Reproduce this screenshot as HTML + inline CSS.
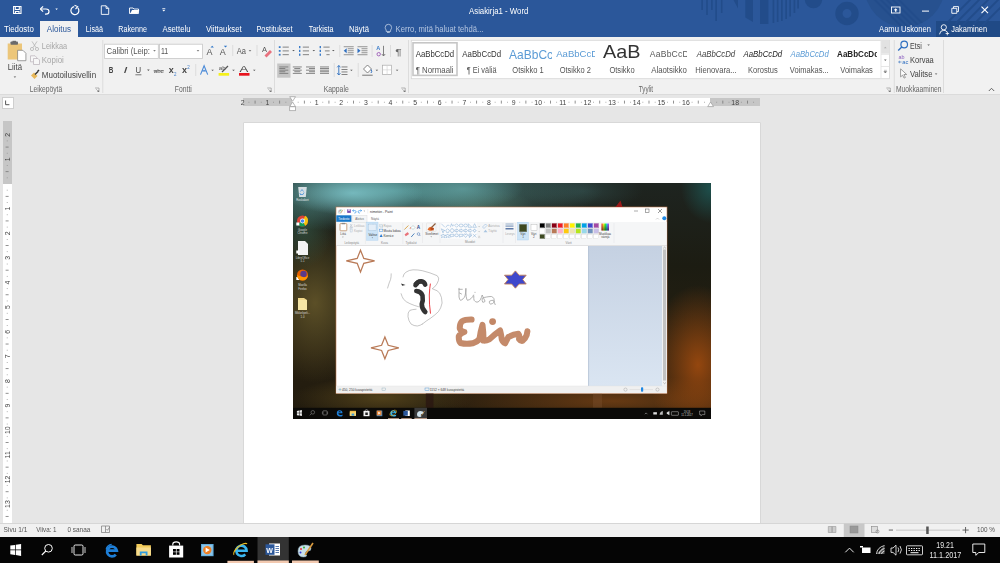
<!DOCTYPE html>
<html><head><meta charset="utf-8">
<style>
*{margin:0;padding:0;box-sizing:border-box}
html,body{width:1000px;height:563px;overflow:hidden}
body{position:relative;font-family:"Liberation Sans", sans-serif;background:#e6e6e6;color:#444}
.a{position:absolute;white-space:nowrap}
</style></head><body>
<div class="a" style="left:0;top:0;width:1000px;height:37px;background:#2b579a"></div>
<div class="a" style="left:40px;top:21.3px;width:38px;height:15.7px;background:#f1f1f1"></div>
<div class="a" style="left:936.3px;top:21.3px;width:63.7px;height:15.7px;background:#204a86"></div>
<div class="a" style="left:0;top:37px;width:1000px;height:58px;background:#f1f1f1"></div>
<div class="a" style="left:0;top:94.4px;width:1000px;height:1px;background:#dbdbdb"></div>
<div class="a" style="left:1.5px;top:97px;width:12px;height:11.5px;background:#fff;border:1px solid #cfcfcf"></div>
<div class="a" style="left:243px;top:98px;width:49px;height:8.3px;background:#c6c6c6"></div>
<div class="a" style="left:292px;top:98px;width:418px;height:8.3px;background:#fff"></div>
<div class="a" style="left:710px;top:98px;width:49.5px;height:8.3px;background:#c6c6c6"></div>
<div class="a" style="left:3px;top:121.3px;width:8.5px;height:62.7px;background:#c6c6c6"></div>
<div class="a" style="left:3px;top:184px;width:8.5px;height:339px;background:#fff"></div>
<div class="a" style="left:244px;top:122.8px;width:516px;height:400.2px;background:#fff;box-shadow:0 0 0 0.6px #d0d0d0"></div>
<div id="img" class="a" style="left:293px;top:183px;width:418px;height:236px;overflow:hidden;background:
radial-gradient(ellipse 70px 22px at 60px 10px, rgba(125,195,200,0.85), rgba(125,195,200,0) 100%),
radial-gradient(ellipse 60px 20px at 170px 6px, rgba(100,165,165,0.7), rgba(100,165,165,0) 100%),
radial-gradient(ellipse 210px 42px at 100px 8px, rgba(85,150,150,0.95), rgba(85,150,150,0) 100%),
radial-gradient(ellipse 60px 20px at 180px 24px, rgba(80,100,70,0.6), rgba(80,100,70,0) 100%),
radial-gradient(ellipse 60px 20px at 290px 8px, rgba(45,68,66,0.8), rgba(45,68,66,0) 100%),
radial-gradient(ellipse 30px 35px at 418px 5px, rgba(30,85,82,0.9), rgba(30,85,82,0) 100%),
radial-gradient(ellipse 30px 40px at 10px 45px, rgba(50,85,70,0.7), rgba(50,85,70,0) 100%),
radial-gradient(ellipse 55px 80px at 22px 120px, rgba(95,82,40,0.95), rgba(95,82,40,0) 100%),
radial-gradient(ellipse 50px 80px at 405px 182px, rgba(160,75,15,0.9), rgba(160,75,15,0) 100%),
radial-gradient(ellipse 180px 25px at 320px 218px, rgba(120,65,20,0.8), rgba(120,65,20,0) 100%),
radial-gradient(ellipse 90px 22px at 90px 215px, rgba(90,72,28,0.8), rgba(90,72,28,0) 100%),
linear-gradient(180deg,#1e2420 0%,#1c1c12 35%,#261f10 70%,#221b0e 100%)">
<svg width="418" height="236" style="position:absolute;left:0;top:0">
<g transform="translate(-293,-183)">
<!-- desktop icons -->
<g>
<path d="M298.2 187 h8.6 l-1 10 h-6.6z" fill="#e4eaee" opacity="0.9"/><path d="M300.5 191.5 l1.5 -2 l1.5 2 M304 192.5 l-1 2 h-3 M299.8 193 l0.8 1.5" fill="none" stroke="#3a8ad8" stroke-width="0.7"/>
<text x="302.5" y="201" font-size="2.8" fill="#e8e8e8" text-anchor="middle">Roskakori</text>
<circle cx="302.5" cy="221" r="5.5" fill="#db4437"/><path d="M302.5 221 L297.7 223.8 A5.5 5.5 0 0 0 305.3 225.8Z" fill="#0f9d58"/><path d="M302.5 221 L308 221 A5.5 5.5 0 0 0 305.3 215.8 L302.5 221Z" fill="#f4c20d"/><path d="M302.5 221 L305.3 225.8 A5.5 5.5 0 0 0 308 221Z" fill="#f4c20d"/><circle cx="302.5" cy="221" r="2.4" fill="#fff"/><circle cx="302.5" cy="221" r="1.8" fill="#4285f4"/>
<text x="302.5" y="230.5" font-size="2.8" fill="#d8d8d8" text-anchor="middle">Google</text><text x="302.5" y="234" font-size="2.8" fill="#d8d8d8" text-anchor="middle">Chrome</text>
<path d="M298 241 h7 l3 3 v11 h-10z" fill="#f4f4f4"/><rect x="296.3" y="222.5" width="3" height="3" fill="#fff"/><rect x="296.3" y="250.5" width="3" height="3" fill="#fff"/><rect x="296.3" y="277" width="3" height="3" fill="#fff"/>
<text x="302.5" y="258.5" font-size="2.8" fill="#d8d8d8" text-anchor="middle">LibreOffice</text><text x="302.5" y="262" font-size="2.8" fill="#d8d8d8" text-anchor="middle">5.1</text>
<circle cx="302.5" cy="275" r="5.5" fill="#e66000"/><circle cx="303.5" cy="274" r="3.2" fill="#5a3a8a"/><path d="M297 275 a5.5 5.5 0 0 0 11 0 q-2 3 -5 2 q-4 -1 -6 -2z" fill="#ff9500"/>
<text x="302.5" y="286" font-size="2.8" fill="#d8d8d8" text-anchor="middle">Mozilla</text><text x="302.5" y="289.5" font-size="2.8" fill="#d8d8d8" text-anchor="middle">Firefox</text>
<path d="M298 298 h6 l3 2 v10 h-9z" fill="#f0d88a"/><rect x="298" y="300" width="9" height="10" fill="#f6e6a6"/>
<text x="302.5" y="314" font-size="2.8" fill="#d8d8d8" text-anchor="middle">Mikkelipeli...</text><text x="302.5" y="317.5" font-size="2.8" fill="#d8d8d8" text-anchor="middle">1.0</text>
</g>
<!-- paint window -->
<rect x="336" y="207" width="331" height="186.5" fill="#fff" stroke="#c07a50" stroke-width="0.6"/>
<rect x="336.3" y="222" width="330.4" height="23.5" fill="#f5f6f7"/>
<line x1="336" y1="245.5" x2="667" y2="245.5" stroke="#dadbdc" stroke-width="0.8"/>
<rect x="336.3" y="215.3" width="15.2" height="6.5" fill="#1979ca"/>
<rect x="352" y="215.3" width="15" height="7" fill="#f5f6f7" stroke="#dadbdc" stroke-width="0.5"/>
<text x="338.2" y="220.2" font-size="3.4" fill="#fff" font-family="Liberation Sans" textLength="11.2" lengthAdjust="spacingAndGlyphs">Tiedosto</text>
<text x="355.3" y="220.2" font-size="3.4" fill="#666" font-family="Liberation Sans" textLength="8.6" lengthAdjust="spacingAndGlyphs">Aloitus</text>
<text x="371" y="220.2" font-size="3.4" fill="#666" font-family="Liberation Sans" textLength="7.8" lengthAdjust="spacingAndGlyphs">Näytä</text>
<!-- title icons -->
<path d="M338.2 212.8 q0 -3.3 2.4 -3.3 q1.8 0 1.8 1.3 q0 0.8 -0.8 0.8 q-0.6 0 -0.6 0.6 q0 0.6 0.4 0.7 q-0.3 0.5 -1 0.5 q-2.2 0 -2.2 -0.6z" fill="#d8e8f0" stroke="#8aa" stroke-width="0.25"/><circle cx="339.3" cy="211" r="0.45" fill="#e33"/><circle cx="340.6" cy="210.3" r="0.45" fill="#3a3"/><path d="M340.8 213 l2 -3.2" stroke="#d89a40" stroke-width="0.6"/>
<line x1="344.5" y1="209" x2="344.5" y2="213.5" stroke="#ccc" stroke-width="0.3"/>
<rect x="347.2" y="209.3" width="3.6" height="3.6" fill="#7a4fb0"/><rect x="348" y="209.3" width="2" height="1.4" fill="#e8e0f0"/>
<path d="M352.6 210.6 h2.2 q1.3 0 1.3 1.2 q0 1.2 -1.3 1.2 h-0.6 M352.6 210.6 l1.1 -1 M352.6 210.6 l1.1 1" fill="none" stroke="#1e88e5" stroke-width="0.6"/>
<path d="M361.6 210.6 h-2.2 q-1.3 0 -1.3 1.2 q0 1.2 1.3 1.2 h0.6 M361.6 210.6 l-1.1 -1 M361.6 210.6 l-1.1 1" fill="none" stroke="#1e88e5" stroke-width="0.6"/>
<path d="M363.6 210.8 h1.4 l-0.7 0.8z" fill="#555"/>
<line x1="367.8" y1="209" x2="367.8" y2="213.5" stroke="#ccc" stroke-width="0.3"/>
<text x="370" y="212.7" font-size="3.4" fill="#333" font-family="Liberation Sans">nimetön - Paint</text>
<line x1="634" y1="211" x2="638" y2="211" stroke="#555" stroke-width="0.5"/>
<rect x="645.5" y="209" width="3.5" height="3.5" fill="none" stroke="#555" stroke-width="0.5"/>
<path d="M658 209 l4 4 M662 209 l-4 4" stroke="#555" stroke-width="0.6"/>
<circle cx="664.3" cy="218.3" r="2" fill="#1e88e5"/>
<path d="M656 219.5 l1.5 -1.5 l1.5 1.5" stroke="#999" stroke-width="0.4" fill="none"/>
<!-- ribbon tools -->
<rect x="340" y="223.6" width="6.8" height="7.2" rx="0.6" fill="#fff" stroke="#b98a62" stroke-width="0.8"/><rect x="341.8" y="222.9" width="3.2" height="1.3" fill="#8a8a8a"/>
<text x="340.3" y="235" font-size="3" fill="#444" font-family="Liberation Sans">Liitä</text><path d="M342.2 236.8 h1.4 l-0.7 0.7z" fill="#555"/>
<path d="M350.2 224 l2 3 M352.2 224 l-2 3" stroke="#9ab" stroke-width="0.4"/><circle cx="350.5" cy="227.5" r="0.6" fill="none" stroke="#9ab" stroke-width="0.35"/><circle cx="352" cy="227.5" r="0.6" fill="none" stroke="#9ab" stroke-width="0.35"/>
<text x="354" y="227.1" font-size="3" fill="#b0b0b0" font-family="Liberation Sans">Leikkaa</text>
<rect x="350" y="228.7" width="2" height="2.6" fill="none" stroke="#bcd" stroke-width="0.35"/><rect x="350.8" y="229.5" width="2" height="2.6" fill="none" stroke="#bcd" stroke-width="0.35"/>
<text x="354" y="232.1" font-size="3" fill="#b0b0b0" font-family="Liberation Sans">Kopioi</text>
<text x="344.4" y="243.8" font-size="3" fill="#888" font-family="Liberation Sans">Leikepöytä</text>
<line x1="365.4" y1="223" x2="365.4" y2="244" stroke="#e2e3e4" stroke-width="0.5"/>
<rect x="366.7" y="222.1" width="11.3" height="18.1" fill="#cce4f7" stroke="#a6cdef" stroke-width="0.4"/>
<rect x="368.4" y="224.2" width="7.9" height="6.3" fill="#e4eef8" stroke="#8aaccc" stroke-width="0.45" stroke-dasharray="0.8 0.4"/>
<text x="368.4" y="235.6" font-size="3" fill="#333" font-family="Liberation Sans">Valitse</text><path d="M371.6 237.6 h1.4 l-0.7 0.7z" fill="#555"/>
<path d="M379.8 224 v3 h2.5 M380.5 224.8 h2 v2.8" stroke="#8ab" stroke-width="0.4" fill="none"/>
<text x="383.5" y="227.1" font-size="3" fill="#aaa" font-family="Liberation Sans">Rajaa</text>
<rect x="379.4" y="229.1" width="3.4" height="2.6" fill="none" stroke="#3a8ad8" stroke-width="0.45"/>
<text x="383.5" y="232" font-size="3" fill="#333" font-family="Liberation Sans">Muuta kokoa</text>
<path d="M379.6 237 l1.5 -3 l1.5 3z" fill="#2a7ad0"/>
<text x="383.5" y="236.8" font-size="3" fill="#333" font-family="Liberation Sans">Kierrä ▾</text>
<text x="381" y="243.8" font-size="3" fill="#888" font-family="Liberation Sans">Kuva</text>
<line x1="402.8" y1="223" x2="402.8" y2="244" stroke="#e2e3e4" stroke-width="0.5"/>
<path d="M404.6 229.3 l3.8 -3.8" stroke="#d8a040" stroke-width="0.9"/><path d="M404.4 229.6 l0.6 -0.2 l-0.4 -0.4z" fill="#555"/>
<path d="M411 227.5 l2 -2 l2 2 l-2 2z" fill="#fff" stroke="#7aa" stroke-width="0.4"/><path d="M410.6 227.3 q-0.8 1.2 0 1.8" stroke="#e06040" stroke-width="0.7" fill="none"/>
<text x="416.8" y="229" font-size="4.6" fill="#2a4a8a" font-family="Liberation Sans" font-weight="bold">A</text>
<rect x="404.8" y="233" width="4" height="2.4" rx="0.4" fill="#e8727a" transform="rotate(-35 406.8 234.2)"/>
<path d="M411.2 237 l3.2 -3.6" stroke="#2a6ab0" stroke-width="0.8"/>
<circle cx="418.5" cy="234" r="1.3" fill="none" stroke="#3a6ab0" stroke-width="0.5"/><path d="M419.4 235 l1 1" stroke="#3a6ab0" stroke-width="0.5"/>
<text x="405.5" y="243.8" font-size="3" fill="#888" font-family="Liberation Sans">Työkalut</text>
<line x1="422.5" y1="223" x2="422.5" y2="243" stroke="#e2e3e4" stroke-width="0.5"/>
<rect x="426.5" y="223" width="9.5" height="8.5" rx="0.8" fill="#f6f6f6" stroke="#d8d8d8" stroke-width="0.4"/><path d="M427.5 229.5 q1.5 -3.5 5 -2.5 l-0.5 3.5 q-2.5 0.8 -4.5 -1z" fill="#e06a2a"/><path d="M430 228.5 q2 -1 4 -0.5 l-0.5 2.5 q-2 0.5 -3.5 -2z" fill="#b84a1a"/><path d="M431.5 227.5 l4 -4" stroke="#8a5a3a" stroke-width="1.1"/><text x="425.3" y="234.6" font-size="3" fill="#444" font-family="Liberation Sans">Siveltimet</text><path d="M430.5 236.6 h1.4 l-0.7 0.7z" fill="#555"/>
<line x1="440" y1="223" x2="440" y2="243" stroke="#e2e3e4" stroke-width="0.5"/>
<rect x="440.5" y="222.6" width="36.5" height="16.2" fill="#fbfbfc"/><g stroke="#6a9ccc" stroke-width="0.42" fill="none"><path d="M441.29999999999995 223.7 L444.9 227.29999999999998"/><path d="M445.79999999999995 227.29999999999998 q1.8 -3.6 3.6 -1.8"/><path d="M450.29999999999995 227.29999999999998 l1.2 -3.6 l1.2 2.52 l1.2 -1.8"/><path d="M454.79999999999995 225.5 l1.8 -1.8 l1.8 1.8 l-1.8 1.8z"/><rect x="459.29999999999995" y="224.2" width="3.6" height="2.6" rx="1"/><ellipse cx="465.59999999999997" cy="225.5" rx="1.8" ry="1.5"/><path d="M468.29999999999995 227.29999999999998 v-3.6 l3.6 3.6z"/><path d="M472.79999999999995 227.29999999999998 l1.8 -3.6 l1.8 3.6z"/><path d="M441.29999999999995 228.79999999999998 l3.6 1.8 l-1.8 0.5 v1.8z"/><path d="M447.59999999999997 228.79999999999998 l1.8 1.4 l-0.7 2.2 h-2.2 l-0.7 -2.2z"/><path d="M451.19999999999993 228.79999999999998 h1.8 l0.9 1.8 l-0.9 1.8 h-1.8 l-0.9 -1.8z"/><path d="M454.79999999999995 229.79999999999998 h2 v-1 l1.6 1.8 l-1.6 1.8 v-1 h-2z"/><path d="M459.29999999999995 229.79999999999998 h2 v-1 l1.6 1.8 l-1.6 1.8 v-1 h-2z"/><path d="M463.79999999999995 229.79999999999998 h2 v-1 l1.6 1.8 l-1.6 1.8 v-1 h-2z"/><path d="M468.29999999999995 229.79999999999998 h2 v-1 l1.6 1.8 l-1.6 1.8 v-1 h-2z"/><path d="M474.59999999999997 228.79999999999998 l0.6 1.2 l1.2 0.6 l-1.2 0.6 l-0.6 1.2 l-0.6 -1.2 l-1.2 -0.6 l1.2 -0.6z"/><path d="M443.09999999999997 233.89999999999998 l0.8 1.3 h1.4 l-1 1.1 l0.5 1.4 l-1.7 -0.8 l-1.7 0.8 l0.5 -1.4 l-1 -1.1 h1.4z"/><path d="M447.59999999999997 233.89999999999998 l0.8 1.3 h1.4 l-1 1.1 l0.5 1.4 l-1.7 -0.8 l-1.7 0.8 l0.5 -1.4 l-1 -1.1 h1.4z"/><path d="M450.29999999999995 234.29999999999998 h3.6 v2.0 h-2 l-1 1 v-1 h-0.6000000000000001 z"/><ellipse cx="456.59999999999997" cy="235.29999999999998" rx="1.8" ry="1.4"/><path d="M459.29999999999995 234.29999999999998 h3.6 v2.0 h-2 l-1 1 v-1 h-0.6000000000000001 z"/><path d="M465.59999999999997 237.49999999999997 l-1.7 -2 q-0.5 -1.5 0.8 -1.6 q0.9 0 0.9 0.8 q0 -0.8 0.9 -0.8 q1.3 0.1 0.8 1.6z"/><path d="M469.29999999999995 233.89999999999998 h2 l-1 1.5 h1.5 l-2.5 2.2 l0.6 -1.6 h-1.3z"/><path d="M472.79999999999995 233.89999999999998 l3.6 3.6 M476.4 233.89999999999998 l-3.6 3.6"/></g><path d="M478.3 226 l0.9 0.9 l0.9 -0.9" stroke="#888" stroke-width="0.35" fill="none"/><path d="M478.3 231 l0.9 0.9 l0.9 -0.9" stroke="#888" stroke-width="0.35" fill="none"/><path d="M478.3 236.3 h1.8 M478.3 237.2 l0.9 0.9 l0.9 -0.9" stroke="#888" stroke-width="0.35" fill="none"/><path d="M482.5 227 l3 -3 l1.5 1.5 l-3 3z" fill="none" stroke="#7aa8d8" stroke-width="0.45"/><path d="M483.5 232.3 l2 -2.5 l2 2.5z" fill="#a8c4e0"/><text x="488.3" y="226.6" font-size="3" fill="#aaa" font-family="Liberation Sans">Ääriviiva</text><text x="488.3" y="232" font-size="3" fill="#aaa" font-family="Liberation Sans">Täyttö</text><text x="465" y="243.3" font-size="3" fill="#888" font-family="Liberation Sans">Muodot</text>
<line x1="503" y1="223" x2="503" y2="243" stroke="#e2e3e4" stroke-width="0.5"/>
<rect x="505.5" y="223.5" width="8" height="1" fill="#9ab0cc"/><rect x="505.5" y="225.5" width="8" height="1.2" fill="#7f98bc"/><rect x="505.5" y="228" width="8" height="1.5" fill="#5f7aa8"/>
<text x="505.2" y="235" font-size="3" fill="#aaa" font-family="Liberation Sans">Leveys</text>
<line x1="515.5" y1="223" x2="515.5" y2="243" stroke="#e2e3e4" stroke-width="0.5"/>
<rect x="517.6" y="222.2" width="10.8" height="17.8" fill="#cce4f7" stroke="#a6cdef" stroke-width="0.4"/>
<rect x="519.3" y="224.3" width="7.5" height="7.5" fill="#3e4a22" stroke="#888" stroke-width="0.3"/>
<text x="520.2" y="235" font-size="3" fill="#444" font-family="Liberation Sans">Väri</text><text x="522.3" y="238.3" font-size="3" fill="#444" font-family="Liberation Sans">1</text>
<rect x="531" y="224.5" width="6" height="6" fill="#fff" stroke="#999" stroke-width="0.3"/>
<text x="531" y="235" font-size="3" fill="#444" font-family="Liberation Sans">Väri</text><text x="533" y="238.3" font-size="3" fill="#444" font-family="Liberation Sans">2</text>
<rect x="539.8" y="223.2" width="5" height="4.6" fill="#000000" stroke="#ddd" stroke-width="0.25"/><rect x="545.8" y="223.2" width="5" height="4.6" fill="#7f7f7f" stroke="#ddd" stroke-width="0.25"/><rect x="551.8" y="223.2" width="5" height="4.6" fill="#880015" stroke="#ddd" stroke-width="0.25"/><rect x="557.8" y="223.2" width="5" height="4.6" fill="#ed1c24" stroke="#ddd" stroke-width="0.25"/><rect x="563.8" y="223.2" width="5" height="4.6" fill="#ff7f27" stroke="#ddd" stroke-width="0.25"/><rect x="569.8" y="223.2" width="5" height="4.6" fill="#fff200" stroke="#ddd" stroke-width="0.25"/><rect x="575.8" y="223.2" width="5" height="4.6" fill="#22b14c" stroke="#ddd" stroke-width="0.25"/><rect x="581.8" y="223.2" width="5" height="4.6" fill="#00a2e8" stroke="#ddd" stroke-width="0.25"/><rect x="587.8" y="223.2" width="5" height="4.6" fill="#3f48cc" stroke="#ddd" stroke-width="0.25"/><rect x="593.8" y="223.2" width="5" height="4.6" fill="#a349a4" stroke="#ddd" stroke-width="0.25"/><rect x="539.8" y="228.7" width="5" height="4.6" fill="#ffffff" stroke="#ccc" stroke-width="0.25"/><rect x="545.8" y="228.7" width="5" height="4.6" fill="#c3c3c3" stroke="#ccc" stroke-width="0.25"/><rect x="551.8" y="228.7" width="5" height="4.6" fill="#b97a57" stroke="#ccc" stroke-width="0.25"/><rect x="557.8" y="228.7" width="5" height="4.6" fill="#ffaec9" stroke="#ccc" stroke-width="0.25"/><rect x="563.8" y="228.7" width="5" height="4.6" fill="#ffc90e" stroke="#ccc" stroke-width="0.25"/><rect x="569.8" y="228.7" width="5" height="4.6" fill="#efe4b0" stroke="#ccc" stroke-width="0.25"/><rect x="575.8" y="228.7" width="5" height="4.6" fill="#b5e61d" stroke="#ccc" stroke-width="0.25"/><rect x="581.8" y="228.7" width="5" height="4.6" fill="#99d9ea" stroke="#ccc" stroke-width="0.25"/><rect x="587.8" y="228.7" width="5" height="4.6" fill="#7092be" stroke="#ccc" stroke-width="0.25"/><rect x="593.8" y="228.7" width="5" height="4.6" fill="#c8bfe7" stroke="#ccc" stroke-width="0.25"/><rect x="539.8" y="234.2" width="5" height="4.6" fill="#3e4a22" stroke="#cfcfcf" stroke-width="0.35"/><rect x="545.8" y="234.2" width="5" height="4.6" fill="#fff" stroke="#cfcfcf" stroke-width="0.35"/><rect x="551.8" y="234.2" width="5" height="4.6" fill="#fff" stroke="#cfcfcf" stroke-width="0.35"/><rect x="557.8" y="234.2" width="5" height="4.6" fill="#fff" stroke="#cfcfcf" stroke-width="0.35"/><rect x="563.8" y="234.2" width="5" height="4.6" fill="#fff" stroke="#cfcfcf" stroke-width="0.35"/><rect x="569.8" y="234.2" width="5" height="4.6" fill="#fff" stroke="#cfcfcf" stroke-width="0.35"/><rect x="575.8" y="234.2" width="5" height="4.6" fill="#fff" stroke="#cfcfcf" stroke-width="0.35"/><rect x="581.8" y="234.2" width="5" height="4.6" fill="#fff" stroke="#cfcfcf" stroke-width="0.35"/><rect x="587.8" y="234.2" width="5" height="4.6" fill="#fff" stroke="#cfcfcf" stroke-width="0.35"/><rect x="593.8" y="234.2" width="5" height="4.6" fill="#fff" stroke="#cfcfcf" stroke-width="0.35"/>
<text x="565.5" y="243.5" font-size="3" fill="#888" font-family="Liberation Sans">Värit</text>
<defs><linearGradient id="rb" x1="0" x2="1"><stop offset="0" stop-color="#f33"/><stop offset="0.3" stop-color="#ff3"/><stop offset="0.5" stop-color="#3f3"/><stop offset="0.7" stop-color="#3cf"/><stop offset="1" stop-color="#c3f"/></linearGradient>
<linearGradient id="dk" x1="0" y1="0" x2="0" y2="1"><stop offset="0" stop-color="#000" stop-opacity="0"/><stop offset="1" stop-color="#000" stop-opacity="0.55"/></linearGradient><linearGradient id="bluearea" x1="0" y1="0" x2="0" y2="1"><stop offset="0" stop-color="#c5d1e2"/><stop offset="1" stop-color="#dae5f2"/></linearGradient></defs>
<rect x="601.5" y="223.5" width="7.5" height="7" fill="url(#rb)"/><rect x="601.5" y="223.5" width="7.5" height="7" fill="url(#dk)"/>
<text x="599" y="235" font-size="3" fill="#444" font-family="Liberation Sans" textLength="12" lengthAdjust="spacingAndGlyphs">Muokkaa</text>
<text x="601.3" y="238.3" font-size="3" fill="#444" font-family="Liberation Sans">värejä</text>
<line x1="614" y1="223" x2="614" y2="243" stroke="#e2e3e4" stroke-width="0.5"/>
<!-- canvas area -->
<rect x="588.3" y="246" width="74" height="140" fill="url(#bluearea)"/>
<line x1="588.6" y1="246" x2="588.6" y2="386" stroke="#9fb0c8" stroke-width="0.6"/>
<rect x="662.3" y="246" width="4.5" height="140" fill="#f0f0f0"/>
<rect x="663" y="249.5" width="3" height="131" fill="#c2c2c2"/>
<path d="M663.3 248.3 l1.3 -1.2 l1.3 1.2" stroke="#666" stroke-width="0.4" fill="none"/>
<path d="M663.3 382.5 l1.3 1.2 l1.3 -1.2" stroke="#666" stroke-width="0.4" fill="none"/>
<!-- status bar -->
<rect x="336.3" y="386" width="330.4" height="7.2" fill="#f0f0f0"/>
<line x1="336" y1="386" x2="667" y2="386" stroke="#e0e0e0" stroke-width="0.4"/>
<path d="M338.5 389.5 h3 M340 388 v3" stroke="#7ab" stroke-width="0.5"/>
<text x="342" y="391.3" font-size="3.2" fill="#444" font-family="Liberation Sans" textLength="30.4" lengthAdjust="spacingAndGlyphs">450, 250 kuvapistettä</text>
<rect x="382" y="388" width="3.5" height="2.5" fill="none" stroke="#8ab" stroke-width="0.4"/>
<rect x="425" y="388" width="4" height="2.8" fill="none" stroke="#3a8ad0" stroke-width="0.4"/>
<text x="429.8" y="391.3" font-size="3.2" fill="#444" font-family="Liberation Sans" textLength="34.3" lengthAdjust="spacingAndGlyphs">1152 × 648 kuvapistettä</text>
<circle cx="625.5" cy="389.6" r="1.6" fill="none" stroke="#888" stroke-width="0.35"/>
<line x1="629.5" y1="389.6" x2="653" y2="389.6" stroke="#ccc" stroke-width="0.4"/>
<rect x="641" y="387.3" width="2.2" height="4.5" rx="0.8" fill="#1e88e5"/>
<circle cx="657.5" cy="389.6" r="1.6" fill="none" stroke="#888" stroke-width="0.35"/>
<!-- drawings -->
<g fill="none" stroke="#b97a57" stroke-width="1.25" stroke-linejoin="miter">
<path d="M360.5 250.2 L363.8 258.4 L374.6 260.9 L363.8 263.4 L360.5 272 L357.2 263.4 L346.3 260.9 L357.2 258.4 Z"/>
<path d="M384.9 337 L388.2 345.3 L398.8 347.9 L388.2 350.5 L384.9 358.8 L381.6 350.5 L371 347.9 L381.6 345.3 Z"/>
</g>
<path d="M515.4 270.9 L519.1 275.2 L526.2 275.2 L522.7 279.5 L526.2 284 L519.1 284 L515.4 288.2 L511.7 284 L504.5 284 L508.1 279.5 L504.5 275.2 L511.7 275.2Z" fill="#3f48cc" stroke="#c07d58" stroke-width="0.9" stroke-linejoin="round"/>
<g fill="none" stroke="#a0a0a0" stroke-width="0.6" stroke-linecap="round" stroke-linejoin="round">
<path d="M391.2 273.8 Q391.2 277 390.6 279.4 Q389.3 282 387.6 288"/>
<path d="M403 276.9 Q403.5 273.5 406 272.2 Q409 270 413 269.8 Q418 269.7 422.3 270.7 Q430 272.5 437.2 275.7 Q439.5 278 438.4 280.6 Q437 284.5 434.7 286.8 L432.2 288.7 Q438 290.5 439.7 293.1 Q442 297 442.1 303 Q441 308.5 438.4 311.7 Q435 315 431 317.9 Q426 321 422.3 324.1"/>
<path d="M401.1 293.7 Q402 297 403.6 299.3 Q406 302 409.8 303.6 Q414 305.5 418.5 306.7"/>
<path d="M416.1 309.2 Q412 309.5 409.8 310.4 Q407.5 312.5 408 316.7 Q408.5 321 411.1 324.1 Q414 326 417.3 326 Q420.5 325.5 422.3 324.1"/>
</g>
<path d="M401.1 283.6 L405.5 285 L402.2 285.8Z" fill="#2e2e2e"/>
<g fill="none" stroke="#333" stroke-width="4.6" stroke-linecap="round" stroke-linejoin="round">
<path d="M415.5 285.2 Q417.5 281.3 421 281.3 Q424.3 281.8 425.2 284.6"/>
<path d="M416.3 291 Q421 291.5 422.5 295.5 Q423.3 300.5 421.8 304 Q421.6 308.5 425.3 312"/>
</g>
<path d="M413.2 284 q3 -5 8 -4.5 q5 0.5 5.8 5.5 l-3 0.8 q-1 -2.5 -3 -2.5 q-2 0 -3 2.5z" fill="#333"/>
<path d="M430.4 283.6 Q429.6 288 429.3 295 Q429.1 304 430.5 313.6" fill="none" stroke="#e8242a" stroke-width="0.9"/>
<g fill="none" stroke="#9a9a9a" stroke-width="0.75" stroke-linecap="round" stroke-linejoin="round">
<path d="M459 288.3 L459 297 Q459.5 299.5 460.4 300.3 Q462 300 463 298.9 Q464.5 297.5 465 296 Q466 292 465.9 288.3 Q465.7 292 466.2 296.5 Q466.6 299.5 467.4 300.3 Q469.5 300 471.2 298.4 Q472.8 296.8 473.6 295"/>
<path d="M459 289.3 L462.3 289.3 M459.5 293 L461.5 294"/>
<path d="M473.8 296 Q473.6 299 474.1 300.3 Q475.3 302 477 302.2 Q479 302 480.3 299.8 Q481.5 297.5 482.2 295 Q483 297 483.7 298.4 Q484.5 300 485.1 301.3 Q484 302.5 482.7 302.2 Q481.8 300.5 482.2 298.4 Q484 297.3 486.6 297 Q489 296.5 491.4 296.5 Q493 297 493.8 298.4 Q494.5 300.5 494.2 302.2 Q492.5 304 490.4 304.2 Q489 303 489.4 301.3 Q491 300.2 493.3 300.3 Q494.5 302.5 495.2 304.6"/>
</g>
<circle cx="475" cy="292.3" r="0.5" fill="#9a9a9a"/>
<g fill="none" stroke="#c38766" stroke-width="6" stroke-linecap="round" stroke-linejoin="round" opacity="0.97">
<path d="M471.6 319.6 Q465 319.5 462 321.3 Q459.5 324 459.8 328.6 Q461 331.5 464.4 332 Q460 333.5 458.8 336.3 Q458.5 341 460.6 343 Q466 344.5 472.7 343.3 Q477 342 479.4 339.2"/>
<path d="M479.4 339.4 Q480.5 331 482.5 324.8 Q483.6 333 483.5 340.6 Q486.5 340.8 489.3 339.4 Q495 334 500.1 330.5 Q501.3 335 501.8 339.4 Q503 342.5 505.1 343.3 Q507 339.5 508.4 337 Q513 334.5 518.4 333.8 Q520.2 336 519 339 Q520.5 341.2 522.5 340.8 Q525.5 338.5 526.7 335 L527.4 331.3"/>
</g>
<circle cx="492.6" cy="321.6" r="3.4" fill="#c38766"/>
<rect x="425.8" y="393.5" width="7.7" height="14.3" fill="#2a1512" opacity="0.75"/><rect x="593" y="393.5" width="9" height="14.3" fill="#8a6040" opacity="0.25"/>
<!-- taskbar -->
<rect x="293" y="407.8" width="418" height="11.2" fill="#0b0a08"/>
<path d="M615.5 207 l5 -6.5 l2 6.5z" fill="#b01818" opacity="0.85"/>
<g fill="#eee"><path d="M296.9 410.9 l2.2 -0.3 v2.2 h-2.2z"/><path d="M299.5 410.5 l2.4 -0.4 v2.7 h-2.4z"/><path d="M296.9 413.3 h2.2 v2.2 l-2.2 -0.3z"/><path d="M299.5 413.3 h2.4 v2.7 l-2.4 -0.4z"/></g>
<circle cx="312.8" cy="412.3" r="1.8" fill="none" stroke="#999" stroke-width="0.5"/><line x1="311.5" y1="413.6" x2="309.8" y2="415.3" stroke="#999" stroke-width="0.55"/>
<rect x="323" y="410.8" width="4" height="4.2" rx="0.5" fill="none" stroke="#aaa" stroke-width="0.5"/><path d="M322.4 411.6 v2.6 M327.6 411.6 v2.6" stroke="#aaa" stroke-width="0.4"/>
<path d="M336.8 413.6 q0 -3.3 2.9 -3.3 q2.8 0 2.8 3 h-4.2 q0.2 1.8 2 1.8 q1.2 0 2.2 -0.6 v1.4 q-1 0.5 -2.4 0.5 q-3.3 0 -3.3 -2.8z M338.4 412.3 h2.5 q-0.2 -1.1 -1.25 -1.1 q-1.05 0 -1.25 1.1z" fill="#1e7fd8"/>
<rect x="349.8" y="410.8" width="6.2" height="5" fill="#f0c050"/><rect x="349.8" y="412.3" width="6.2" height="3.5" fill="#f6d878"/><rect x="351.6" y="413.6" width="2.6" height="2" fill="#3a9ad8"/>
<rect x="363.5" y="410.9" width="6" height="5.3" fill="#f4f4f4"/><path d="M365 410.9 q0 -1.2 1.5 -1.2 q1.5 0 1.5 1.2" fill="none" stroke="#eee" stroke-width="0.5"/><rect x="365.3" y="412.5" width="2.5" height="2.5" fill="#222"/>
<rect x="376.7" y="410.6" width="5.6" height="5.6" fill="#3a8ad0"/><rect x="376.7" y="410.6" width="4.8" height="4.8" fill="#e8883a"/><path d="M378.3 411.8 l2.2 1.3 l-2.2 1.3z" fill="#fff"/>
<path d="M390.3 413.6 q0 -3.3 3 -3.3 q2.8 0 2.8 3 h-4.2 q0.2 1.8 2 1.8 q1.2 0 2.2 -0.6 v1.4 q-1 0.5 -2.4 0.5 q-3.4 0 -3.4 -2.8z M391.9 412.3 h2.5 q-0.2 -1.1 -1.25 -1.1 q-1.05 0 -1.25 1.1z" fill="#3ab4ec"/>
<ellipse cx="393.2" cy="413" rx="4" ry="2" transform="rotate(-35 393.2 413)" fill="none" stroke="#e8b820" stroke-width="0.5"/>
<rect x="388" y="418.3" width="11" height="0.7" fill="#e8c0a8"/>
<rect x="405.3" y="410.5" width="4.5" height="5.5" fill="#fff"/><rect x="403.3" y="410.9" width="4.5" height="4.8" fill="#2b579a"/>
<rect x="401.2" y="418.3" width="10.5" height="0.7" fill="#e8c0a8"/>
<rect x="414.4" y="407.8" width="12.6" height="11.2" fill="#3a3a3a"/>
<path d="M417 414.5 q0 -3.5 3.5 -3.5 q3 0 3 1.8 q0 1.2 -1.5 1.2 q-1.2 0 -1.2 1 q0 1 0.7 1.2 q-0.5 0.8 -1.6 0.8 q-2.9 0 -2.9 -2.5z" fill="#d0e2ec"/><path d="M421.5 415.5 l3 -4.5" stroke="#d8a050" stroke-width="0.7"/>
<rect x="414.4" y="418.3" width="12.6" height="0.7" fill="#e8c0a8"/>
<g stroke="#ddd" stroke-width="0.45" fill="none">
<path d="M644.8 414.2 l1.3 -1.3 l1.3 1.3"/>
<path d="M667 412.3 h0.9 l1.3 -1 v3.6 l-1.3 -1 h-0.9z" fill="#ddd"/>
<rect x="671.4" y="411.7" width="7" height="3.6" rx="0.4"/>
<path d="M699.6 411 h5.2 v3.6 h-2.6 l-1.3 1.2 v-1.2 h-1.3z"/>
</g>
<rect x="653.3" y="412.2" width="3.6" height="2.3" fill="#ddd"/>
<path d="M659.6 414.8 q0.3 -3.2 3.2 -3.8 v3.8z" fill="#bbb"/>
<text x="687" y="412.6" font-size="2.6" fill="#ccc" font-family="Liberation Sans" text-anchor="middle">19.18</text><text x="687" y="416" font-size="2.6" fill="#ccc" font-family="Liberation Sans" text-anchor="middle">11.1.2017</text>
</g></svg></div>
<div class="a" style="left:0;top:523px;width:1000px;height:14px;background:#f1f1f1;border-top:1px solid #d6d6d6"></div>
<div class="a" style="left:0;top:537px;width:1000px;height:26px;background:#050505"></div>
<svg class="a" width="1000" height="563" style="left:0;top:0;will-change:transform" font-family="Liberation Sans"><g fill="none" stroke="#fff" stroke-width="1.1"><path d="M13.6 6.5 h7.4 v7 h-7.4z"/><path d="M15.3 6.5 v3 h4 v-3"/><path d="M15.5 13.5 v-2 h3.5 v2"/></g><path d="M41 9 h5 q3 0 3 2.6 q0 2.6 -3 2.6 h-1" fill="none" stroke="#fff" stroke-width="1.2"/><path d="M40.3 9 l2.8 -2.6 M40.3 9 l2.8 2.6" stroke="#fff" stroke-width="1.2"/><path d="M55.3 8.5 h2.6 l-1.3 1.5z" fill="#fff"/><path d="M77.8 7.8 a4 4 0 1 1 -3.6 -1.2" fill="none" stroke="#fff" stroke-width="1.2"/><path d="M74.5 5.2 l3.2 1.4 l-2.2 2.6" fill="none" stroke="#fff" stroke-width="1.1"/><path d="M101.3 5.8 h4.8 l2.6 2.6 v6 h-7.4z M106.1 5.8 v2.6 h2.6" fill="none" stroke="#fff" stroke-width="0.9"/><path d="M129.5 8 h3.5 l1 1 h4.5 v4.5 h-9z" fill="none" stroke="#fff" stroke-width="0.9"/><path d="M130.2 13.6 l1.8 -3.6 h7.3 l-1.8 3.6z" fill="#fff"/><rect x="162.3" y="8" width="3" height="0.7" fill="#fff"/><path d="M162.2 9.8 h3.2 l-1.6 1.6z" fill="#fff"/><defs><clipPath id="tb"><rect x="0" y="0" width="1000" height="37"/></clipPath><clipPath id="bigc"><circle cx="904.6" cy="-13" r="40"/></clipPath></defs><g clip-path="url(#tb)" fill="#224c8a"><rect x="701.3" y="0" width="1.6" height="10"/><rect x="706.2" y="0" width="1.6" height="15"/><rect x="711.1" y="0" width="1.6" height="10"/><rect x="715.3" y="0" width="1.6" height="21"/><rect x="720.9" y="0" width="1.6" height="13"/><path d="M733.5 0 h4.5 v8.5z"/><path d="M745.3 0 h7.7 v22 l-7.7 -4.5z"/><rect x="760" y="0" width="8.4" height="24"/><rect x="772.6" y="0" width="1.7" height="23"/><rect x="776.8" y="0" width="1.7" height="22"/><rect x="781" y="0" width="1.7" height="21"/><rect x="785.3" y="0" width="1.7" height="19"/><rect x="789.3" y="0" width="1.7" height="16.5"/><rect x="793.6" y="0" width="1.7" height="13"/><rect x="797.2" y="0" width="1.7" height="8.5"/><circle cx="813.5" cy="-0.5" r="8.7"/></g><circle cx="847" cy="13.5" r="8.1" fill="none" stroke="#224c8a" stroke-width="7.2"/><circle cx="904.6" cy="-13" r="40" fill="#27518f"/><g clip-path="url(#bigc)" stroke="#224c8a" stroke-width="1.6"><path d="M870 -5 l40 40"/><path d="M876 -5 l40 40"/><path d="M882 -5 l40 40"/><path d="M888 -5 l40 40"/><path d="M894 -5 l40 40"/></g><g clip-path="url(#tb)" stroke="#224c8a" stroke-width="1.8"><path d="M948 22 l24 -24"/><path d="M955 24 l26 -26"/><path d="M962 26 l28 -28"/><path d="M970 28 l30 -30"/><path d="M978 30 l30 -30"/></g><rect x="891.5" y="7" width="8.5" height="6" fill="none" stroke="#fff" stroke-width="0.9"/><path d="M895.7 8.3 l2 2 h-1.3 v1.5 h-1.4 v-1.5 h-1.3z" fill="#fff"/><rect x="922" y="10.6" width="7" height="1" fill="#fff"/><path d="M951.8 8.3 h5 v5 h-5z M953.5 8.3 v-1.7 h5 v5 h-1.7" fill="none" stroke="#fff" stroke-width="0.9"/><path d="M981.5 6.7 l6.5 6.5 M988 6.7 l-6.5 6.5" stroke="#fff" stroke-width="1.1"/><path d="M386.2 30 q-1 -1.2 -1 -2.5 a3.2 3.2 0 0 1 6.4 0 q0 1.3 -1 2.5 v1.5 h-4.4z" fill="none" stroke="#c2d0e6" stroke-width="0.8"/><path d="M387 32.5 h2.8" stroke="#c2d0e6" stroke-width="0.8"/><circle cx="943.8" cy="27.3" r="2.6" fill="none" stroke="#fff" stroke-width="0.9"/><path d="M939.5 34.3 q0.5 -4 4.3 -4 q2.5 0 3.5 2" fill="none" stroke="#fff" stroke-width="0.9"/><path d="M947.3 31.8 v3.5 M945.6 33.5 h3.5" stroke="#fff" stroke-width="0.8"/><rect x="7.7" y="43.5" width="14.3" height="16" fill="#ecc67a"/><rect x="10.5" y="41.5" width="7.5" height="3.3" rx="0.8" fill="#6b6b6b"/><rect x="12.5" y="40.8" width="3.5" height="1.5" fill="#6b6b6b"/><path d="M17.6 50.3 h5.3 l3 3 v7.4 h-8.3z" fill="#fff" stroke="#777" stroke-width="0.7"/><path d="M13.6 76.5 h2.6 l-1.3 1.3z" fill="#555"/><g fill="none" stroke="#b4b4b4" stroke-width="0.8"><circle cx="32" cy="49" r="1.6"/><circle cx="37" cy="49" r="1.6"/><path d="M33 47.6 l4 -6.2 M36 47.6 l-4 -6.2"/></g><g fill="#f7f7f7" stroke="#b8b0b8" stroke-width="0.7"><path d="M30.5 55.8 h4.5 l1.5 1.5 v4.5 h-6z"/><path d="M33.5 58.5 h4.5 l1.5 1.5 v4.5 h-6z"/></g><path d="M31 75.5 l3 -3 l3.5 3.5 l-3 3z" fill="#e8b85a"/><path d="M34.5 74 l3 -3 l1 1 l-3 3z" fill="#333"/><path d="M37 71 l1.5 -1.5 l1 1 l-1.5 1.5z" fill="#333"/><path d="M95 88 h4 v4 M96.2 89.2 l2.8 2.8" fill="none" stroke="#888" stroke-width="0.6"/><path d="M99 92 h-2 l2 -2z" fill="#777"/><rect x="102.3" y="40" width="1" height="53" fill="#dcdcdc"/><rect x="104.6" y="44.2" width="53.7" height="14.3" fill="#fff" stroke="#c6c6c6" stroke-width="0.8"/><rect x="159.4" y="44.2" width="43.1" height="14.3" fill="#fff" stroke="#c6c6c6" stroke-width="0.8"/><path d="M153.2 50.3 h2.6 l-1.3 1.3z" fill="#555"/><path d="M196.7 50.3 h2.6 l-1.3 1.3z" fill="#555"/><rect x="135.4" y="74.5" width="6" height="0.7" fill="#444"/><path d="M147.1 69.60000000000001 h2.6 l-1.3 1.3z" fill="#555"/><rect x="153.5" y="70.6" width="10.5" height="0.6" fill="#555"/><rect x="195.2" y="64" width="1" height="12" fill="#dcdcdc"/><path d="M210.5 47.5 l1.7 -1.7 l1.7 1.7z" fill="#2b74c8"/><path d="M223.8 45.8 h3.4 l-1.7 1.7z" fill="#2b74c8"/><rect x="232.2" y="45" width="1" height="11" fill="#dcdcdc"/><path d="M248.7 50.199999999999996 h2.6 l-1.3 1.3z" fill="#555"/><rect x="256.5" y="45" width="1" height="11" fill="#dcdcdc"/><path d="M264.5 55.5 l5.5 -5.5 l2 2 l-5.5 5.5z" fill="#e8717e"/><path d="M200.5 74.6 l3.6 -8.8 l3.6 8.8 M202 71 h4.5" fill="none" stroke="#4a8ad8" stroke-width="1.1"/><circle cx="204.1" cy="70.5" r="0.8" fill="#4a8ad8"/><path d="M211.29999999999998 69.7 h2.6 l-1.3 1.3z" fill="#555"/><path d="M222 72 l6 -6" stroke="#555" stroke-width="1.2"/><rect x="218.6" y="73" width="10.5" height="2.7" fill="#f5f01a"/><path d="M232.2 69.7 h2.6 l-1.3 1.3z" fill="#555"/><rect x="239" y="73" width="10.5" height="2.7" fill="#e8141e"/><path d="M253.0 69.7 h2.6 l-1.3 1.3z" fill="#555"/><path d="M267.2 88 h4 v4 M268.4 89.2 l2.8 2.8" fill="none" stroke="#888" stroke-width="0.6"/><path d="M271.2 92 h-2 l2 -2z" fill="#777"/><rect x="274" y="40" width="1" height="53" fill="#dcdcdc"/><g><rect x="278.8" y="46.2" width="1.8" height="1.8" fill="#3b7cc9"/><rect x="282.6" y="46.65" width="6.2" height="0.9" fill="#777"/><rect x="278.8" y="50.0" width="1.8" height="1.8" fill="#3b7cc9"/><rect x="282.6" y="50.449999999999996" width="6.2" height="0.9" fill="#777"/><rect x="278.8" y="53.800000000000004" width="1.8" height="1.8" fill="#3b7cc9"/><rect x="282.6" y="54.25" width="6.2" height="0.9" fill="#777"/></g><path d="M292.2 50.0 h2.6 l-1.3 1.3z" fill="#555"/><g><rect x="299" y="46.0" width="1.4" height="2.2" fill="#3b7cc9"/><rect x="302.8" y="46.65" width="6.2" height="0.9" fill="#777"/><rect x="299" y="49.8" width="1.4" height="2.2" fill="#3b7cc9"/><rect x="302.8" y="50.449999999999996" width="6.2" height="0.9" fill="#777"/><rect x="299" y="53.6" width="1.4" height="2.2" fill="#3b7cc9"/><rect x="302.8" y="54.25" width="6.2" height="0.9" fill="#777"/></g><path d="M312.5 50.0 h2.6 l-1.3 1.3z" fill="#555"/><g><rect x="319.6" y="46.0" width="1.4" height="2.2" fill="#3b7cc9"/><rect x="323.40000000000003" y="46.65" width="6.2" height="0.9" fill="#777"/><rect x="319.6" y="49.8" width="1.4" height="2.2" fill="#3b7cc9"/><rect x="324.90000000000003" y="50.449999999999996" width="4.7" height="0.9" fill="#777"/><rect x="319.6" y="53.6" width="1.4" height="2.2" fill="#3b7cc9"/><rect x="326.40000000000003" y="54.25" width="3.2" height="0.9" fill="#777"/></g><path d="M332.0 50.0 h2.6 l-1.3 1.3z" fill="#555"/><rect x="339.3" y="45" width="1" height="12" fill="#dcdcdc"/><rect x="343.7" y="46.3" width="10" height="0.9" fill="#8a8a8a"/><rect x="347.7" y="48.3" width="6" height="0.9" fill="#8a8a8a"/><rect x="347.7" y="50.3" width="6" height="0.9" fill="#8a8a8a"/><rect x="347.7" y="52.3" width="6" height="0.9" fill="#8a8a8a"/><rect x="343.7" y="54.3" width="10" height="0.9" fill="#8a8a8a"/><path d="M343.7 50.8 l3 -2.5 v5z" fill="#2f6fc0"/><rect x="357.5" y="46.3" width="10" height="0.9" fill="#8a8a8a"/><rect x="361.5" y="48.3" width="6" height="0.9" fill="#8a8a8a"/><rect x="361.5" y="50.3" width="6" height="0.9" fill="#8a8a8a"/><rect x="361.5" y="52.3" width="6" height="0.9" fill="#8a8a8a"/><rect x="357.5" y="54.3" width="10" height="0.9" fill="#8a8a8a"/><path d="M360.5 50.8 l-3 -2.5 v5z" fill="#2f6fc0"/><rect x="371.6" y="45" width="1" height="12" fill="#dcdcdc"/><text x="376.2" y="50" font-size="5.5" fill="#3b7cc9" font-weight="bold">A</text><circle cx="378.7" cy="54.2" r="1.7" fill="none" stroke="#9b59b6" stroke-width="0.9"/><path d="M383.5 45.8 v10 M381.8 54 l1.7 2 l1.7 -2" fill="none" stroke="#666" stroke-width="0.8"/><rect x="390" y="45" width="1" height="12" fill="#dcdcdc"/><rect x="277.2" y="63.5" width="13.3" height="14.2" fill="#c5c5c5"/><rect x="279.3" y="66.5" width="9" height="0.9" fill="#7a7a7a"/><rect x="279.3" y="68.1" width="6" height="0.9" fill="#7a7a7a"/><rect x="279.3" y="69.7" width="9" height="0.9" fill="#7a7a7a"/><rect x="279.3" y="71.3" width="6" height="0.9" fill="#7a7a7a"/><rect x="279.3" y="72.9" width="9" height="0.9" fill="#7a7a7a"/><rect x="292.8" y="66.5" width="9" height="0.9" fill="#7a7a7a"/><rect x="294.3" y="68.1" width="6" height="0.9" fill="#7a7a7a"/><rect x="292.8" y="69.7" width="9" height="0.9" fill="#7a7a7a"/><rect x="294.3" y="71.3" width="6" height="0.9" fill="#7a7a7a"/><rect x="292.8" y="72.9" width="9" height="0.9" fill="#7a7a7a"/><rect x="306" y="66.5" width="9" height="0.9" fill="#7a7a7a"/><rect x="309" y="68.1" width="6" height="0.9" fill="#7a7a7a"/><rect x="306" y="69.7" width="9" height="0.9" fill="#7a7a7a"/><rect x="309" y="71.3" width="6" height="0.9" fill="#7a7a7a"/><rect x="306" y="72.9" width="9" height="0.9" fill="#7a7a7a"/><rect x="320" y="66.5" width="9" height="0.9" fill="#7a7a7a"/><rect x="320" y="68.1" width="9" height="0.9" fill="#7a7a7a"/><rect x="320" y="69.7" width="9" height="0.9" fill="#7a7a7a"/><rect x="320" y="71.3" width="9" height="0.9" fill="#7a7a7a"/><rect x="320" y="72.9" width="9" height="0.9" fill="#7a7a7a"/><rect x="333.7" y="63" width="1" height="14" fill="#dcdcdc"/><path d="M338.8 65.5 v9.5 M337.2 67.3 l1.6 -1.8 l1.6 1.8 M337.2 73.2 l1.6 1.8 l1.6 -1.8" fill="none" stroke="#2f6fc0" stroke-width="0.9"/><rect x="341.5" y="66.5" width="6" height="0.9" fill="#777"/><rect x="341.5" y="69" width="6" height="0.9" fill="#777"/><rect x="341.5" y="71.5" width="6" height="0.9" fill="#777"/><rect x="341.5" y="74" width="6" height="0.9" fill="#777"/><path d="M350.09999999999997 69.7 h2.6 l-1.3 1.3z" fill="#555"/><rect x="357.7" y="63" width="1" height="14" fill="#dcdcdc"/><path d="M363.5 69 l4 -4 l4 4 l-4 4z" fill="#fff" stroke="#666" stroke-width="0.8"/><path d="M371 69.5 q1.5 2 0 3.5" fill="none" stroke="#2f6fc0" stroke-width="1"/><rect x="362.2" y="74.7" width="10.5" height="1" fill="#777"/><path d="M375.59999999999997 69.7 h2.6 l-1.3 1.3z" fill="#555"/><rect x="382.6" y="65.2" width="9" height="9.3" fill="#fff" stroke="#aaa" stroke-width="0.7"/><path d="M387.1 65.2 v9.3 M382.6 69.85 h9" stroke="#ccc" stroke-width="0.6"/><path d="M395.8 69.7 h2.6 l-1.3 1.3z" fill="#555"/><path d="M401.2 88 h4 v4 M402.4 89.2 l2.8 2.8" fill="none" stroke="#888" stroke-width="0.6"/><path d="M405.2 92 h-2 l2 -2z" fill="#777"/><rect x="408" y="40" width="1" height="53" fill="#dcdcdc"/><rect x="411.3" y="40.3" width="478.2" height="38.4" fill="#fff" stroke="#d6d6d6" stroke-width="0.8"/><rect x="413" y="42.8" width="44" height="32.6" fill="none" stroke="#c6c6c6" stroke-width="1.6"/><svg x="505" y="44" width="47" height="20"><text x="4.1" y="15" font-size="12.4" fill="#5b9bd5" textLength="44" lengthAdjust="spacingAndGlyphs">AaBbCc</text></svg><svg x="552" y="44" width="43" height="20"><text x="4.2" y="13.3" font-size="9.6" fill="#5b9bd5" textLength="42" lengthAdjust="spacingAndGlyphs">AaBbCcD</text></svg><svg x="600" y="40" width="40" height="22"><text x="3.1" y="18.3" font-size="18.6" fill="#333" textLength="37.5" lengthAdjust="spacingAndGlyphs">AaB</text></svg><svg x="645" y="44" width="42" height="20"><text x="4.8" y="13.2" font-size="8.6" fill="#5a5a5a" letter-spacing="0.2">AaBbCcDd</text></svg><svg x="834" y="44" width="43" height="20"><text x="3.1" y="13.2" font-size="9.6" fill="#222" font-weight="bold" textLength="42" lengthAdjust="spacingAndGlyphs">AaBbCcDd</text></svg><rect x="881.2" y="40.6" width="8.3" height="13.1" fill="#e2e2e2"/><path d="M883.9 48.2 h2.8 l-1.4 -1.4z" fill="#b0b0b0"/><rect x="881" y="53.9" width="8.5" height="0.8" fill="#e2e2e2"/><rect x="881" y="66" width="8.5" height="0.8" fill="#e2e2e2"/><rect x="880.6" y="40.6" width="0.8" height="38" fill="#e2e2e2"/><path d="M884.0 59.6 h2.6 l-1.3 1.3z" fill="#666"/><path d="M884 70.3 h2.8 M883.9 71.6 h2.8 l-1.4 1.4z" fill="#666" stroke="#666" stroke-width="0.4"/><path d="M886.3 88 h4 v4 M887.5 89.2 l2.8 2.8" fill="none" stroke="#888" stroke-width="0.6"/><path d="M890.3 92 h-2 l2 -2z" fill="#777"/><rect x="893.8" y="40" width="1" height="53" fill="#dcdcdc"/><circle cx="904.2" cy="44.5" r="3.3" fill="none" stroke="#2f6fc0" stroke-width="1.2"/><path d="M901.8 47 l-3.6 3.6" stroke="#2f6fc0" stroke-width="1.4"/><path d="M927.3000000000001 44.4 h2.6 l-1.3 1.3z" fill="#555"/><path d="M898.5 62 h3 M900 60.8 l-1.3 1.2 l1.3 1.2" fill="none" stroke="#2f6fc0" stroke-width="0.6"/><path d="M900.6 68.9 v8 l2 -1.8 l1.5 3 l1.3 -0.6 l-1.5 -3 h2.8z" fill="#fff" stroke="#777" stroke-width="0.7"/><path d="M934.8000000000001 73.4 h2.6 l-1.3 1.3z" fill="#555"/><rect x="943" y="40" width="1" height="53" fill="#dcdcdc"/><path d="M988.8 91 l2.7 -2.7 l2.7 2.7" fill="none" stroke="#555" stroke-width="0.9"/><text x="242.76" y="104.7" font-size="6.9" fill="#444" text-anchor="middle">2</text><rect x="248.51" y="101.8" width="0.8" height="0.8" fill="#888"/><rect x="254.67" y="100.6" width="0.8" height="3" fill="#777"/><rect x="260.83" y="101.8" width="0.8" height="0.8" fill="#888"/><text x="267.38" y="104.7" font-size="6.9" fill="#444" text-anchor="middle">1</text><rect x="273.14" y="101.8" width="0.8" height="0.8" fill="#888"/><rect x="279.29" y="100.6" width="0.8" height="3" fill="#777"/><rect x="285.45" y="101.8" width="0.8" height="0.8" fill="#888"/><rect x="297.75" y="101.8" width="0.8" height="0.8" fill="#888"/><rect x="303.91" y="100.6" width="0.8" height="3" fill="#777"/><rect x="310.06" y="101.8" width="0.8" height="0.8" fill="#888"/><text x="316.62" y="104.7" font-size="6.9" fill="#444" text-anchor="middle">1</text><rect x="322.38" y="101.8" width="0.8" height="0.8" fill="#888"/><rect x="328.53" y="100.6" width="0.8" height="3" fill="#777"/><rect x="334.69" y="101.8" width="0.8" height="0.8" fill="#888"/><text x="341.24" y="104.7" font-size="6.9" fill="#444" text-anchor="middle">2</text><rect x="347.00" y="101.8" width="0.8" height="0.8" fill="#888"/><rect x="353.15" y="100.6" width="0.8" height="3" fill="#777"/><rect x="359.31" y="101.8" width="0.8" height="0.8" fill="#888"/><text x="365.86" y="104.7" font-size="6.9" fill="#444" text-anchor="middle">3</text><rect x="371.62" y="101.8" width="0.8" height="0.8" fill="#888"/><rect x="377.77" y="100.6" width="0.8" height="3" fill="#777"/><rect x="383.93" y="101.8" width="0.8" height="0.8" fill="#888"/><text x="390.48" y="104.7" font-size="6.9" fill="#444" text-anchor="middle">4</text><rect x="396.24" y="101.8" width="0.8" height="0.8" fill="#888"/><rect x="402.39" y="100.6" width="0.8" height="3" fill="#777"/><rect x="408.55" y="101.8" width="0.8" height="0.8" fill="#888"/><text x="415.10" y="104.7" font-size="6.9" fill="#444" text-anchor="middle">5</text><rect x="420.86" y="101.8" width="0.8" height="0.8" fill="#888"/><rect x="427.01" y="100.6" width="0.8" height="3" fill="#777"/><rect x="433.17" y="101.8" width="0.8" height="0.8" fill="#888"/><text x="439.72" y="104.7" font-size="6.9" fill="#444" text-anchor="middle">6</text><rect x="445.48" y="101.8" width="0.8" height="0.8" fill="#888"/><rect x="451.63" y="100.6" width="0.8" height="3" fill="#777"/><rect x="457.79" y="101.8" width="0.8" height="0.8" fill="#888"/><text x="464.34" y="104.7" font-size="6.9" fill="#444" text-anchor="middle">7</text><rect x="470.10" y="101.8" width="0.8" height="0.8" fill="#888"/><rect x="476.25" y="100.6" width="0.8" height="3" fill="#777"/><rect x="482.41" y="101.8" width="0.8" height="0.8" fill="#888"/><text x="488.96" y="104.7" font-size="6.9" fill="#444" text-anchor="middle">8</text><rect x="494.72" y="101.8" width="0.8" height="0.8" fill="#888"/><rect x="500.87" y="100.6" width="0.8" height="3" fill="#777"/><rect x="507.03" y="101.8" width="0.8" height="0.8" fill="#888"/><text x="513.58" y="104.7" font-size="6.9" fill="#444" text-anchor="middle">9</text><rect x="519.34" y="101.8" width="0.8" height="0.8" fill="#888"/><rect x="525.49" y="100.6" width="0.8" height="3" fill="#777"/><rect x="531.65" y="101.8" width="0.8" height="0.8" fill="#888"/><text x="538.20" y="104.7" font-size="6.9" fill="#444" text-anchor="middle">10</text><rect x="543.96" y="101.8" width="0.8" height="0.8" fill="#888"/><rect x="550.11" y="100.6" width="0.8" height="3" fill="#777"/><rect x="556.26" y="101.8" width="0.8" height="0.8" fill="#888"/><text x="562.82" y="104.7" font-size="6.9" fill="#444" text-anchor="middle">11</text><rect x="568.58" y="101.8" width="0.8" height="0.8" fill="#888"/><rect x="574.73" y="100.6" width="0.8" height="3" fill="#777"/><rect x="580.89" y="101.8" width="0.8" height="0.8" fill="#888"/><text x="587.44" y="104.7" font-size="6.9" fill="#444" text-anchor="middle">12</text><rect x="593.20" y="101.8" width="0.8" height="0.8" fill="#888"/><rect x="599.35" y="100.6" width="0.8" height="3" fill="#777"/><rect x="605.50" y="101.8" width="0.8" height="0.8" fill="#888"/><text x="612.06" y="104.7" font-size="6.9" fill="#444" text-anchor="middle">13</text><rect x="617.82" y="101.8" width="0.8" height="0.8" fill="#888"/><rect x="623.97" y="100.6" width="0.8" height="3" fill="#777"/><rect x="630.13" y="101.8" width="0.8" height="0.8" fill="#888"/><text x="636.68" y="104.7" font-size="6.9" fill="#444" text-anchor="middle">14</text><rect x="642.44" y="101.8" width="0.8" height="0.8" fill="#888"/><rect x="648.59" y="100.6" width="0.8" height="3" fill="#777"/><rect x="654.75" y="101.8" width="0.8" height="0.8" fill="#888"/><text x="661.30" y="104.7" font-size="6.9" fill="#444" text-anchor="middle">15</text><rect x="667.06" y="101.8" width="0.8" height="0.8" fill="#888"/><rect x="673.21" y="100.6" width="0.8" height="3" fill="#777"/><rect x="679.37" y="101.8" width="0.8" height="0.8" fill="#888"/><text x="685.92" y="104.7" font-size="6.9" fill="#444" text-anchor="middle">16</text><rect x="691.68" y="101.8" width="0.8" height="0.8" fill="#888"/><rect x="697.83" y="100.6" width="0.8" height="3" fill="#777"/><rect x="703.99" y="101.8" width="0.8" height="0.8" fill="#888"/><rect x="716.29" y="101.8" width="0.8" height="0.8" fill="#888"/><rect x="722.45" y="100.6" width="0.8" height="3" fill="#777"/><rect x="728.61" y="101.8" width="0.8" height="0.8" fill="#888"/><text x="735.16" y="104.7" font-size="6.9" fill="#444" text-anchor="middle">18</text><rect x="740.92" y="101.8" width="0.8" height="0.8" fill="#888"/><rect x="747.07" y="100.6" width="0.8" height="3" fill="#777"/><rect x="753.23" y="101.8" width="0.8" height="0.8" fill="#888"/><path d="M289.7 96.7 h5.8 l-2.9 4.6z" fill="#fff" stroke="#9a9a9a" stroke-width="0.7" stroke-linejoin="round"/><path d="M289.7 106.6 l2.9 -4.6 l2.9 4.6z" fill="#fff" stroke="#9a9a9a" stroke-width="0.7" stroke-linejoin="round"/><rect x="289.7" y="106.8" width="5.8" height="3.9" fill="#fff" stroke="#9a9a9a" stroke-width="0.7"/><path d="M707.7 106.6 l2.9 -4.6 l2.9 4.6z" fill="#fff" stroke="#9a9a9a" stroke-width="0.7" stroke-linejoin="round"/><path d="M5.6 100.5 v4.2 h3.8" fill="none" stroke="#555" stroke-width="1"/><text x="0" y="0" font-size="6.9" fill="#444" text-anchor="middle" transform="translate(9.7 134.76) rotate(-90)">2</text><rect x="6.8" y="140.51" width="0.8" height="0.8" fill="#888"/><rect x="5.6" y="146.67" width="3" height="0.8" fill="#777"/><rect x="6.8" y="152.82" width="0.8" height="0.8" fill="#888"/><text x="0" y="0" font-size="6.9" fill="#444" text-anchor="middle" transform="translate(9.7 159.38) rotate(-90)">1</text><rect x="6.8" y="165.13" width="0.8" height="0.8" fill="#888"/><rect x="5.6" y="171.29" width="3" height="0.8" fill="#777"/><rect x="6.8" y="177.44" width="0.8" height="0.8" fill="#888"/><rect x="6.8" y="189.75" width="0.8" height="0.8" fill="#888"/><rect x="5.6" y="195.91" width="3" height="0.8" fill="#777"/><rect x="6.8" y="202.06" width="0.8" height="0.8" fill="#888"/><text x="0" y="0" font-size="6.9" fill="#444" text-anchor="middle" transform="translate(9.7 208.62) rotate(-90)">1</text><rect x="6.8" y="214.38" width="0.8" height="0.8" fill="#888"/><rect x="5.6" y="220.53" width="3" height="0.8" fill="#777"/><rect x="6.8" y="226.69" width="0.8" height="0.8" fill="#888"/><text x="0" y="0" font-size="6.9" fill="#444" text-anchor="middle" transform="translate(9.7 233.24) rotate(-90)">2</text><rect x="6.8" y="239.00" width="0.8" height="0.8" fill="#888"/><rect x="5.6" y="245.15" width="3" height="0.8" fill="#777"/><rect x="6.8" y="251.30" width="0.8" height="0.8" fill="#888"/><text x="0" y="0" font-size="6.9" fill="#444" text-anchor="middle" transform="translate(9.7 257.86) rotate(-90)">3</text><rect x="6.8" y="263.62" width="0.8" height="0.8" fill="#888"/><rect x="5.6" y="269.77" width="3" height="0.8" fill="#777"/><rect x="6.8" y="275.93" width="0.8" height="0.8" fill="#888"/><text x="0" y="0" font-size="6.9" fill="#444" text-anchor="middle" transform="translate(9.7 282.48) rotate(-90)">4</text><rect x="6.8" y="288.24" width="0.8" height="0.8" fill="#888"/><rect x="5.6" y="294.39" width="3" height="0.8" fill="#777"/><rect x="6.8" y="300.55" width="0.8" height="0.8" fill="#888"/><text x="0" y="0" font-size="6.9" fill="#444" text-anchor="middle" transform="translate(9.7 307.10) rotate(-90)">5</text><rect x="6.8" y="312.86" width="0.8" height="0.8" fill="#888"/><rect x="5.6" y="319.01" width="3" height="0.8" fill="#777"/><rect x="6.8" y="325.17" width="0.8" height="0.8" fill="#888"/><text x="0" y="0" font-size="6.9" fill="#444" text-anchor="middle" transform="translate(9.7 331.72) rotate(-90)">6</text><rect x="6.8" y="337.48" width="0.8" height="0.8" fill="#888"/><rect x="5.6" y="343.63" width="3" height="0.8" fill="#777"/><rect x="6.8" y="349.79" width="0.8" height="0.8" fill="#888"/><text x="0" y="0" font-size="6.9" fill="#444" text-anchor="middle" transform="translate(9.7 356.34) rotate(-90)">7</text><rect x="6.8" y="362.10" width="0.8" height="0.8" fill="#888"/><rect x="5.6" y="368.25" width="3" height="0.8" fill="#777"/><rect x="6.8" y="374.41" width="0.8" height="0.8" fill="#888"/><text x="0" y="0" font-size="6.9" fill="#444" text-anchor="middle" transform="translate(9.7 380.96) rotate(-90)">8</text><rect x="6.8" y="386.72" width="0.8" height="0.8" fill="#888"/><rect x="5.6" y="392.87" width="3" height="0.8" fill="#777"/><rect x="6.8" y="399.03" width="0.8" height="0.8" fill="#888"/><text x="0" y="0" font-size="6.9" fill="#444" text-anchor="middle" transform="translate(9.7 405.58) rotate(-90)">9</text><rect x="6.8" y="411.34" width="0.8" height="0.8" fill="#888"/><rect x="5.6" y="417.49" width="3" height="0.8" fill="#777"/><rect x="6.8" y="423.65" width="0.8" height="0.8" fill="#888"/><text x="0" y="0" font-size="6.9" fill="#444" text-anchor="middle" transform="translate(9.7 430.20) rotate(-90)">10</text><rect x="6.8" y="435.96" width="0.8" height="0.8" fill="#888"/><rect x="5.6" y="442.11" width="3" height="0.8" fill="#777"/><rect x="6.8" y="448.27" width="0.8" height="0.8" fill="#888"/><text x="0" y="0" font-size="6.9" fill="#444" text-anchor="middle" transform="translate(9.7 454.82) rotate(-90)">11</text><rect x="6.8" y="460.58" width="0.8" height="0.8" fill="#888"/><rect x="5.6" y="466.73" width="3" height="0.8" fill="#777"/><rect x="6.8" y="472.89" width="0.8" height="0.8" fill="#888"/><text x="0" y="0" font-size="6.9" fill="#444" text-anchor="middle" transform="translate(9.7 479.44) rotate(-90)">12</text><rect x="6.8" y="485.20" width="0.8" height="0.8" fill="#888"/><rect x="5.6" y="491.35" width="3" height="0.8" fill="#777"/><rect x="6.8" y="497.51" width="0.8" height="0.8" fill="#888"/><text x="0" y="0" font-size="6.9" fill="#444" text-anchor="middle" transform="translate(9.7 504.06) rotate(-90)">13</text><rect x="6.8" y="509.82" width="0.8" height="0.8" fill="#888"/><rect x="5.6" y="515.97" width="3" height="0.8" fill="#777"/><path d="M101.5 526 h4 v6.5 h-4z M105.5 526 h4 v6.5 h-4" fill="none" stroke="#777" stroke-width="0.7"/><path d="M106.5 529 l1 1.3 l2 -3" fill="none" stroke="#777" stroke-width="0.7"/><path d="M828.3 526.5 h3.8 v6 h-3.8z M832.1 526.5 h3.8 v6 h-3.8z" fill="#ccc" stroke="#999" stroke-width="0.6"/><rect x="843.8" y="523.5" width="20.7" height="13.5" fill="#c8c8c8"/><rect x="850" y="526" width="8" height="7" fill="#999" stroke="#888" stroke-width="0.5"/><rect x="871.3" y="526.3" width="6" height="6" fill="#ddd" stroke="#888" stroke-width="0.6"/><circle cx="877.5" cy="531.5" r="1.5" fill="none" stroke="#777" stroke-width="0.6"/><rect x="888.8" y="529.6" width="4.2" height="0.9" fill="#555"/><rect x="896" y="529.8" width="64" height="0.6" fill="#aaa"/><rect x="926.2" y="526.5" width="2.5" height="7.5" fill="#555"/><rect x="962.5" y="529.6" width="6.2" height="0.9" fill="#555"/><rect x="965.15" y="527" width="0.9" height="6.2" fill="#555"/><g fill="#fff"><path d="M10.3 545.6 l4.8 -0.7 v4.7 h-4.8z"/><path d="M15.8 544.8 l5.3 -0.8 v5.6 h-5.3z"/><path d="M10.3 550.3 h4.8 v4.7 l-4.8 -0.7z"/><path d="M15.8 550.3 h5.3 v5.6 l-5.3 -0.8z"/></g><circle cx="48.5" cy="548.3" r="3.8" fill="none" stroke="#fff" stroke-width="1"/><path d="M45.8 551 l-4 4" stroke="#fff" stroke-width="1.1"/><rect x="74" y="545" width="9" height="10" rx="1.3" fill="none" stroke="#fff" stroke-width="0.9"/><path d="M72 547 v6 M85 547 v6" stroke="#fff" stroke-width="0.8"/><path d="M107.6 550.6 h9.2 a4.9 4.9 0 1 0 -1 4" stroke="#1e7fd8" stroke-width="2.7" fill="none"/><path d="M106.2 549.5 q1 -4.5 5.5 -5" stroke="#1e7fd8" stroke-width="1.4" fill="none"/><path d="M136.4 544 h5.2 l1.3 1.3 h8 v10.3 h-14.5z" fill="#f3cc5a"/><rect x="136.4" y="547.5" width="14.5" height="8.1" fill="#f8dc8c"/><path d="M139.8 551.5 h7.7 v4.1 h-1.8 v-2.3 h-4.1 v2.3 h-1.8z" fill="#2f9be0"/><path d="M169.1 545.6 h14.1 v11.9 h-14.1z" fill="#fff"/><path d="M172.8 545.6 v-1.5 q0 -2.2 3.4 -2.2 q3.4 0 3.4 2.2 v1.5" fill="none" stroke="#fff" stroke-width="1.1"/><g fill="#000"><rect x="173" y="549" width="2.9" height="2.6"/><rect x="176.6" y="549" width="2.9" height="2.6"/><rect x="173" y="552.2" width="2.9" height="2.6"/><rect x="176.6" y="552.2" width="2.9" height="2.6"/></g><rect x="201" y="544" width="12.6" height="12.2" fill="#5aa8d8"/><rect x="202" y="544.8" width="10.6" height="10.6" fill="#8cc4e8"/><circle cx="207.3" cy="550.1" r="4.2" fill="#f07f22"/><path d="M205.6 547.6 l4.2 2.5 l-4.2 2.5z" fill="#fff"/><path d="M236.2 550.8 h10.4 a5.2 5.2 0 1 0 -1.3 3.5" stroke="#3bb5ee" stroke-width="2.6" fill="none"/><path d="M233.9 554.9 A8.6 3.6 -40 0 1 247.1 543.9" fill="none" stroke="#f0c020" stroke-width="1.1"/><rect x="257.5" y="537" width="31.3" height="26" fill="#333"/><rect x="269" y="543.5" width="11" height="12" fill="#fff"/><g fill="#2b579a"><rect x="265.5" y="544.3" width="9" height="10.5"/></g><text x="266.3" y="552.8" font-size="7" font-weight="bold" fill="#fff">W</text><g fill="#2b579a"><rect x="275.5" y="546" width="3.5" height="0.8"/><rect x="275.5" y="548" width="3.5" height="0.8"/><rect x="275.5" y="550" width="3.5" height="0.8"/><rect x="275.5" y="552" width="3.5" height="0.8"/></g><path d="M298 551 q0 -6 7 -6 q6 0 6 3.5 q0 2.5 -3 2.5 q-2.5 0 -2.5 2 q0 2 1.5 2.5 q-1 1.5 -3.5 1.5 q-5.5 0 -5.5 -6z" fill="#c8dfe8" stroke="#8aaabb" stroke-width="0.5"/><circle cx="301" cy="549" r="1" fill="#e33"/><circle cx="304" cy="547.5" r="1" fill="#3a3"/><circle cx="300.5" cy="552.5" r="1" fill="#33d"/><path d="M305 555 l8 -12" stroke="#d89a40" stroke-width="1.6"/><rect x="227.4" y="560.8" width="26.5" height="2.2" fill="#f2c9b0"/><rect x="257.5" y="560.5" width="31.3" height="2.5" fill="#f2c9b0"/><rect x="292" y="560.5" width="26.8" height="2.5" fill="#f2c9b0"/><path d="M845.3 552.3 l4.2 -4.2 l4.2 4.2" fill="none" stroke="#fff" stroke-width="0.9"/><rect x="862" y="547.5" width="8.5" height="5.5" fill="#fff"/><rect x="860" y="546" width="3" height="1.5" fill="#fff"/><g fill="none" stroke="#fff" stroke-width="0.8"><path d="M876.5 554 q0.5 -6.5 8 -8.5"/><path d="M879 554 q0.5 -4 5.5 -5.5"/><path d="M881.5 554 q0.3 -2 3 -3"/></g><path d="M884.5 545.5 v8.5 h-8z" fill="#fff" opacity="0.35"/><path d="M891 548 h2 l3 -2.8 v10 l-3 -2.8 h-2z" fill="none" stroke="#fff" stroke-width="0.8"/><path d="M898 547.5 q1.5 2.3 0 4.6 M900 546 q2.8 3.8 0 7.6" fill="none" stroke="#fff" stroke-width="0.8"/><rect x="906.5" y="545.8" width="16" height="9" rx="0.8" fill="none" stroke="#fff" stroke-width="0.8"/><g fill="#fff"><rect x="908.5" y="548" width="1.3" height="1"/><rect x="911" y="548" width="1.3" height="1"/><rect x="913.5" y="548" width="1.3" height="1"/><rect x="916" y="548" width="1.3" height="1"/><rect x="918.5" y="548" width="1.3" height="1"/><rect x="908.5" y="550" width="1.3" height="1"/><rect x="911" y="550" width="1.3" height="1"/><rect x="913.5" y="550" width="1.3" height="1"/><rect x="916" y="550" width="1.3" height="1"/><rect x="918.5" y="550" width="1.3" height="1"/><rect x="910.5" y="552.2" width="8" height="1"/></g><path d="M972.8 544 h12 v8.5 h-6 l-3 2.8 v-2.8 h-3z" fill="none" stroke="#fff" stroke-width="0.9"/><text x="469" y="13.6" font-size="9" fill="#fff" textLength="59.4" lengthAdjust="spacingAndGlyphs">Asiakirja1 - Word</text><text x="3.9" y="31.9" font-size="9.6" fill="#fff" textLength="29.9" lengthAdjust="spacingAndGlyphs">Tiedosto</text><text x="46.8" y="31.9" font-size="9.6" fill="#2b579a" textLength="24.1" lengthAdjust="spacingAndGlyphs">Aloitus</text><text x="85.8" y="31.9" font-size="9.6" fill="#fff" textLength="17.2" lengthAdjust="spacingAndGlyphs">Lisää</text><text x="118.3" y="31.9" font-size="9.6" fill="#fff" textLength="28.6" lengthAdjust="spacingAndGlyphs">Rakenne</text><text x="162.5" y="31.9" font-size="9.6" fill="#fff" textLength="28" lengthAdjust="spacingAndGlyphs">Asettelu</text><text x="206" y="31.9" font-size="9.6" fill="#fff" textLength="35.6" lengthAdjust="spacingAndGlyphs">Viittaukset</text><text x="256.4" y="31.9" font-size="9.6" fill="#fff" textLength="36.1" lengthAdjust="spacingAndGlyphs">Postitukset</text><text x="308.8" y="31.9" font-size="9.6" fill="#fff" textLength="24.7" lengthAdjust="spacingAndGlyphs">Tarkista</text><text x="349" y="31.9" font-size="9.6" fill="#fff" textLength="20" lengthAdjust="spacingAndGlyphs">Näytä</text><text x="395.6" y="31.9" font-size="9.6" fill="#b4c5e0" textLength="87.8" lengthAdjust="spacingAndGlyphs">Kerro, mitä haluat tehdä...</text><text x="879.1" y="31.9" font-size="9.6" fill="#fff" textLength="51.8" lengthAdjust="spacingAndGlyphs">Aamu Uskonen</text><text x="951.3" y="31.9" font-size="9.6" fill="#fff" textLength="35.7" lengthAdjust="spacingAndGlyphs">Jakaminen</text><text x="7.7" y="70" font-size="9.6" fill="#444" textLength="14.3" lengthAdjust="spacingAndGlyphs">Liitä</text><text x="41.8" y="48.6" font-size="9.6" fill="#a8a8a8" textLength="25.3" lengthAdjust="spacingAndGlyphs">Leikkaa</text><text x="41.8" y="63.4" font-size="9.6" fill="#a8a8a8" textLength="22" lengthAdjust="spacingAndGlyphs">Kopioi</text><text x="41.8" y="78" font-size="9.6" fill="#444" textLength="54.3" lengthAdjust="spacingAndGlyphs">Muotoilusivellin</text><text x="29.7" y="91.6" font-size="9.6" fill="#666" textLength="32.5" lengthAdjust="spacingAndGlyphs">Leikepöytä</text><text x="106.6" y="54" font-size="9.6" fill="#555" textLength="43.4" lengthAdjust="spacingAndGlyphs">Calibri (Leip:</text><text x="161" y="54" font-size="9.6" fill="#555" textLength="7.2" lengthAdjust="spacingAndGlyphs">11</text><text x="108.8" y="73.2" font-size="8.5" fill="#444" textLength="4.6" lengthAdjust="spacingAndGlyphs" font-weight="bold">B</text><text x="123.4" y="73.2" font-size="8.5" fill="#444" textLength="4" lengthAdjust="spacingAndGlyphs" font-style="italic">I</text><text x="135.6" y="73.2" font-size="8.5" fill="#444" textLength="5.6" lengthAdjust="spacingAndGlyphs">U</text><text x="153.7" y="72.8" font-size="6" fill="#555" textLength="10" lengthAdjust="spacingAndGlyphs">abc</text><text x="168.8" y="73" font-size="8.5" fill="#444" textLength="5" lengthAdjust="spacingAndGlyphs" font-weight="bold">x</text><text x="174" y="75.5" font-size="4.5" fill="#3e7bc8" textLength="2.5" lengthAdjust="spacingAndGlyphs">2</text><text x="182" y="73" font-size="8.5" fill="#444" textLength="5" lengthAdjust="spacingAndGlyphs" font-weight="bold">x</text><text x="187.2" y="68.5" font-size="4.5" fill="#3e7bc8" textLength="2.5" lengthAdjust="spacingAndGlyphs">2</text><text x="174.8" y="91.6" font-size="9.6" fill="#666" textLength="17" lengthAdjust="spacingAndGlyphs">Fontti</text><text x="206.6" y="54.8" font-size="9" fill="#555" textLength="6" lengthAdjust="spacingAndGlyphs">A</text><text x="219.8" y="54.8" font-size="9" fill="#555" textLength="6" lengthAdjust="spacingAndGlyphs">A</text><text x="236.8" y="53.8" font-size="8.2" fill="#555" textLength="9.2" lengthAdjust="spacingAndGlyphs">Aa</text><text x="262" y="52" font-size="6.5" fill="#555" textLength="5" lengthAdjust="spacingAndGlyphs">A</text><text x="218.7" y="69.5" font-size="6" fill="#555" textLength="7" lengthAdjust="spacingAndGlyphs">ab</text><text x="239.6" y="72.2" font-size="9" fill="#444" textLength="8.8" lengthAdjust="spacingAndGlyphs">A</text><text x="395.2" y="55.2" font-size="9" fill="#666" textLength="6.4" lengthAdjust="spacingAndGlyphs">¶</text><text x="323.7" y="91.6" font-size="9.6" fill="#666" textLength="25" lengthAdjust="spacingAndGlyphs">Kappale</text><text x="415.7" y="57.2" font-size="9.6" fill="#333" textLength="38.5" lengthAdjust="spacingAndGlyphs">AaBbCcDd</text><text x="415.7" y="72.7" font-size="9.6" fill="#555" textLength="37.8" lengthAdjust="spacingAndGlyphs">¶ Normaali</text><text x="462.3" y="57.2" font-size="9.6" fill="#333" textLength="38.8" lengthAdjust="spacingAndGlyphs">AaBbCcDd</text><text x="466.8" y="72.7" font-size="9.6" fill="#555" textLength="29.7" lengthAdjust="spacingAndGlyphs">¶ Ei väliä</text><text x="512.3" y="72.7" font-size="9.6" fill="#555" textLength="31.3" lengthAdjust="spacingAndGlyphs">Otsikko 1</text><text x="559.7" y="72.7" font-size="9.6" fill="#555" textLength="31.2" lengthAdjust="spacingAndGlyphs">Otsikko 2</text><text x="609.4" y="72.7" font-size="9.6" fill="#555" textLength="25.2" lengthAdjust="spacingAndGlyphs">Otsikko</text><text x="651.2" y="72.7" font-size="9.6" fill="#555" textLength="35.7" lengthAdjust="spacingAndGlyphs">Alaotsikko</text><text x="696.7" y="57.2" font-size="9.6" fill="#404040" textLength="38.5" lengthAdjust="spacingAndGlyphs" font-style="italic">AaBbCcDd</text><text x="695.3" y="72.7" font-size="9.6" fill="#555" textLength="41.3" lengthAdjust="spacingAndGlyphs">Hienovara...</text><text x="743.6" y="57.2" font-size="9.6" fill="#222" textLength="38.5" lengthAdjust="spacingAndGlyphs" font-style="italic">AaBbCcDd</text><text x="748.1" y="72.7" font-size="9.6" fill="#555" textLength="29.6" lengthAdjust="spacingAndGlyphs">Korostus</text><text x="790.5" y="57.2" font-size="9.6" fill="#5b9bd5" textLength="38.2" lengthAdjust="spacingAndGlyphs" font-style="italic">AaBbCcDd</text><text x="789.8" y="72.7" font-size="9.6" fill="#555" textLength="38.9" lengthAdjust="spacingAndGlyphs">Voimakas...</text><text x="840.3" y="72.7" font-size="9.6" fill="#555" textLength="32.5" lengthAdjust="spacingAndGlyphs">Voimakas</text><text x="638.8" y="91.6" font-size="9.6" fill="#666" textLength="14.3" lengthAdjust="spacingAndGlyphs">Tyylit</text><text x="910" y="48.5" font-size="9.6" fill="#444" textLength="11.8" lengthAdjust="spacingAndGlyphs">Etsi</text><text x="898.5" y="59.3" font-size="5.2" fill="#8e63c0" textLength="6" lengthAdjust="spacingAndGlyphs">ab</text><text x="902.3" y="64.3" font-size="5.2" fill="#2f6fc0" textLength="6" lengthAdjust="spacingAndGlyphs">ac</text><text x="910" y="62.9" font-size="9.6" fill="#444" textLength="23.8" lengthAdjust="spacingAndGlyphs">Korvaa</text><text x="910" y="76.5" font-size="9.6" fill="#444" textLength="22.4" lengthAdjust="spacingAndGlyphs">Valitse</text><text x="896" y="91.6" font-size="9.6" fill="#666" textLength="45.6" lengthAdjust="spacingAndGlyphs">Muokkaaminen</text><text x="3.6" y="531.9" font-size="7.5" fill="#555" textLength="23.7" lengthAdjust="spacingAndGlyphs">Sivu 1/1</text><text x="36.2" y="531.9" font-size="7.5" fill="#555" textLength="20.4" lengthAdjust="spacingAndGlyphs">Viiva: 1</text><text x="67.4" y="531.9" font-size="7.5" fill="#555" textLength="23" lengthAdjust="spacingAndGlyphs">0 sanaa</text><text x="977" y="532.3" font-size="7.5" fill="#555" textLength="18" lengthAdjust="spacingAndGlyphs">100 %</text><text x="936.3" y="547.6" font-size="9" fill="#e8e8e8" textLength="17.5" lengthAdjust="spacingAndGlyphs">19.21</text><text x="929.5" y="558.2" font-size="9" fill="#e8e8e8" textLength="31.8" lengthAdjust="spacingAndGlyphs">11.1.2017</text></svg>
</body></html>
